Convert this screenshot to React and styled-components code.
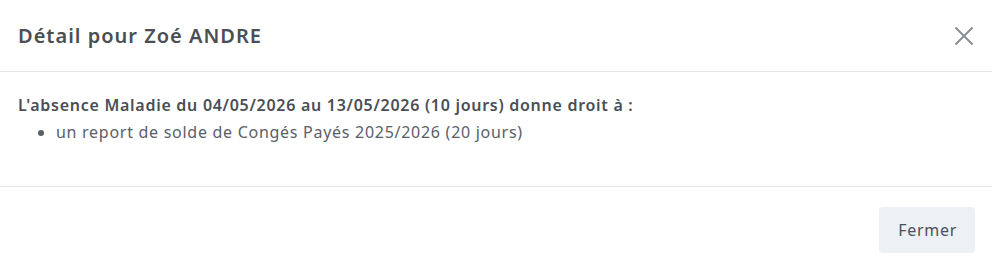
import styled, { createGlobalStyle } from "styled-components";

const GlobalStyle = createGlobalStyle`
  body {
    margin: 0;
    background: #fff;
    font-family: "Noto Sans", sans-serif;
    color: #495057;
  }
`;

const Modal = styled.div`
  width: 992px;
  background: #fff;
`;

const Header = styled.div`
  display: flex;
  align-items: center;
  justify-content: space-between;
  height: 72px;
  padding: 0 16px 0 18px;
  border-bottom: 1px solid #e3e5e8;
  box-sizing: border-box;
`;

const Title = styled.h2`
  margin: 0;
  font-size: 20px;
  font-weight: 600;
  letter-spacing: 1px;
  color: #4a4f55;
`;

const CloseButton = styled.button`
  display: flex;
  align-items: center;
  justify-content: center;
  width: 24px;
  height: 24px;
  padding: 0;
  border: 0;
  background: none;
  color: #868e96;
  cursor: pointer;
`;

const Body = styled.div`
  padding: 20px 18px 40px;
  border-bottom: 1px solid #e3e5e8;
  font-size: 16px;
  line-height: 27px;
  letter-spacing: 0.72px;
`;

const Lead = styled.p`
  margin: 0;
  font-weight: 600;
  color: #4a4f55;
`;

const List = styled.ul`
  margin: 0;
  padding-left: 38px;
  color: #5a6066;
`;

const Footer = styled.div`
  display: flex;
  justify-content: flex-end;
  padding: 20px 17px 14px;
`;

const Button = styled.button`
  height: 46px;
  padding: 0 18px 0 19px;
  border: 0;
  border-radius: 4px;
  background: #edf0f4;
  color: #495057;
  font-family: inherit;
  font-size: 16px;
  letter-spacing: 0.7px;
  cursor: pointer;
`;

export default function App() {
  return (
    <>
      <GlobalStyle />
      <Modal>
        <Header>
          <Title>Détail pour Zoé ANDRE</Title>
          <CloseButton aria-label="Fermer">
            <svg width="20" height="20" viewBox="0 0 20 20" fill="none">
              <path
                d="M2 2L18 18M18 2L2 18"
                stroke="currentColor"
                strokeWidth="2"
                strokeLinecap="round"
              />
            </svg>
          </CloseButton>
        </Header>
        <Body>
          <Lead>
            L'absence Maladie du 04/05/2026 au 13/05/2026 (10 jours) donne droit
            à :
          </Lead>
          <List>
            <li>un report de solde de Congés Payés 2025/2026 (20 jours)</li>
          </List>
        </Body>
        <Footer>
          <Button>Fermer</Button>
        </Footer>
      </Modal>
    </>
  );
}
